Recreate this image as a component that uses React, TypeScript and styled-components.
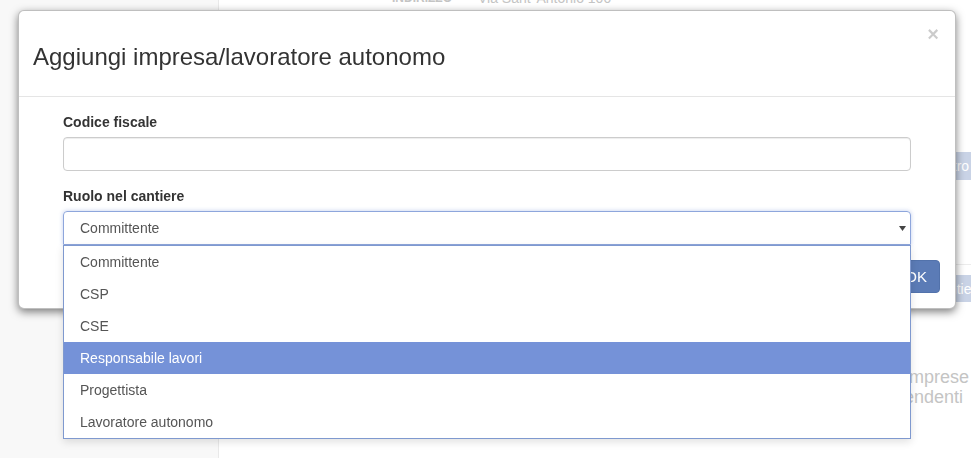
import React from 'react';
import styled, {createGlobalStyle} from 'styled-components';

// page + modal styles

const GlobalStyle = createGlobalStyle`
    html, body {
        margin: 0;
        padding: 0;
        height: 100%;
    }
    body {
        font-family: "Liberation Sans", Arial, Helvetica, sans-serif;
        font-size: 14px;
        color: #333;
        background: #fff;
        overflow: hidden;
    }
`;

// background page, mostly hidden by the modal

const Page = styled.div`
    display: flex;
    height: 100vh;
`;

const Sidebar = styled.aside`
    width: 218px;
    flex: none;
    background: #f8f8f8;
    border-right: 1px solid #e9e9e9;
`;

const Main = styled.main`
    flex: 1;
    display: flex;
    min-width: 0;
`;

const Content = styled.div`
    flex: 1;
    padding-left: 173px;
`;

const TopInfo = styled.div`
    margin-top: -12px;
    line-height: 20px;
    color: #c4c4c4;
    display: flex;
    gap: 26px;
`;

const InfoKey = styled.span`
    font-weight: bold;
    text-transform: uppercase;
    font-size: 12px;
`;

const SideColumn = styled.div`
    width: 91px;
    flex: none;
    padding-top: 152px;
    overflow: hidden;
`;

const FadedButton = styled.div<{$offset: number; $top: number; $height: number}>`
    margin-left: ${p => p.$offset}px;
    margin-top: ${p => p.$top}px;
    height: ${p => p.$height}px;
    padding: 0 12px;
    display: flex;
    align-items: center;
    white-space: nowrap;
    background: #c9d3e6;
    color: #fff;
    border-radius: 3px;
    width: max-content;
`;

const FadedRule = styled.hr`
    margin: 84px 0 0;
    border: 0;
    border-top: 1px solid #ececec;
`;

const FadedText = styled.div`
    margin-top: 65px;
    font-size: 18px;
    line-height: 20px;
    color: #c4c4c4;
    white-space: nowrap;
`;

// modal

const Overlay = styled.div`
    position: fixed;
    inset: 0;
    padding: 10px 0 0 18px;
`;

const Dialog = styled.div`
    width: 938px;
    box-sizing: border-box;
    background: #fff;
    border: 1px solid rgba(0, 0, 0, 0.25);
    border-radius: 6px;
    box-shadow: 0 3px 9px rgba(0, 0, 0, 0.5);
`;

const Header = styled.div`
    display: flex;
    justify-content: space-between;
    align-items: flex-start;
    padding: 15px 15px 26px 14px;
    border-bottom: 1px solid #e5e5e5;
`;

const Title = styled.h4`
    margin: 18px 0 0;
    font-size: 24px;
    line-height: 26px;
    font-weight: normal;
    color: #333;
`;

const Close = styled.button`
    margin-top: -2px;
    margin-right: 1px;
    padding: 0;
    border: 0;
    background: none;
    font-family: inherit;
    font-size: 20px;
    line-height: 21px;
    font-weight: bold;
    color: #000;
    opacity: 0.2;
    cursor: pointer;
`;

const Body = styled.div`
    padding: 15px 44px;
`;

const FormGroup = styled.div<{$last?: boolean}>`
    margin-bottom: ${p => (p.$last ? 0 : 15)}px;
`;

const Label = styled.label`
    display: block;
    margin-bottom: 5px;
    font-weight: bold;
    line-height: 20px;
`;

const Input = styled.input`
    display: block;
    width: 100%;
    height: 34px;
    box-sizing: border-box;
    border: 1px solid #ccc;
    border-radius: 4px;
    box-shadow: inset 0 1px 1px rgba(0, 0, 0, 0.075);
    outline: none;
`;

const SelectWrap = styled.div`
    position: relative;
`;

const SelectBox = styled.div`
    height: 34px;
    box-sizing: border-box;
    display: flex;
    align-items: center;
    justify-content: space-between;
    padding: 0 4px 0 16px;
    border: 1px solid #8ea6dc;
    border-radius: 4px 4px 0 0;
    box-shadow: 0 0 4px rgba(117, 146, 216, 0.45);
    color: #555;
`;

const OptionList = styled.ul`
    position: absolute;
    top: 100%;
    left: 0;
    right: 0;
    margin: 0;
    padding: 0;
    list-style: none;
    background: #fff;
    border: 1px solid #7f99cf;
    box-shadow: 0 3px 8px rgba(0, 0, 0, 0.12);
    z-index: 2;
`;

const Option = styled.li<{$active?: boolean}>`
    height: 32px;
    line-height: 32px;
    padding-left: 16px;
    color: ${p => (p.$active ? '#fff' : '#555')};
    background: ${p => (p.$active ? '#7592d8' : 'transparent')};
`;

const Footer = styled.div`
    display: flex;
    justify-content: flex-end;
    padding: 0 15px 15px;
`;

const PrimaryButton = styled.button`
    height: 33px;
    padding: 0 12px;
    font-family: inherit;
    font-size: 15px;
    color: #fff;
    background: #5b7bb6;
    border: 1px solid #5272ab;
    border-radius: 4px;
`;

const roles = [
    'Committente',
    'CSP',
    'CSE',
    'Responsabile lavori',
    'Progettista',
    'Lavoratore autonomo'
];

const Caret = (): React.ReactElement => (
    <svg width="7" height="5" viewBox="0 0 7 5">
        <path d="M0 0 L7 0 L3.5 5 Z" fill="#444" />
    </svg>
);

export default function App(): React.ReactElement {
    return <>
        <GlobalStyle />
        <Page>
            <Sidebar />
            <Main>
                <Content>
                    <TopInfo>
                        <InfoKey>Indirizzo</InfoKey>
                        <span>Via Sant' Antonio 100</span>
                    </TopInfo>
                </Content>
                <SideColumn>
                    <FadedButton $offset={25} $top={0} $height={28}>Registro cantiere</FadedButton>
                    <FadedRule />
                    <FadedButton $offset={39} $top={10} $height={27}>Cantiere</FadedButton>
                    <FadedText>Le imprese<br />dipendenti</FadedText>
                </SideColumn>
            </Main>
        </Page>
        <Overlay>
            <Dialog>
                <Header>
                    <Title>Aggiungi impresa/lavoratore autonomo</Title>
                    <Close>×</Close>
                </Header>
                <Body>
                    <FormGroup>
                        <Label>Codice fiscale</Label>
                        <Input />
                    </FormGroup>
                    <FormGroup $last>
                        <Label>Ruolo nel cantiere</Label>
                        <SelectWrap>
                            <SelectBox>
                                <span>Committente</span>
                                <Caret />
                            </SelectBox>
                            <OptionList>
                                {roles.map(r => <Option key={r} $active={r === 'Responsabile lavori'}>{r}</Option>)}
                            </OptionList>
                        </SelectWrap>
                    </FormGroup>
                </Body>
                <Footer>
                    <PrimaryButton>OK</PrimaryButton>
                </Footer>
            </Dialog>
        </Overlay>
    </>;
}
